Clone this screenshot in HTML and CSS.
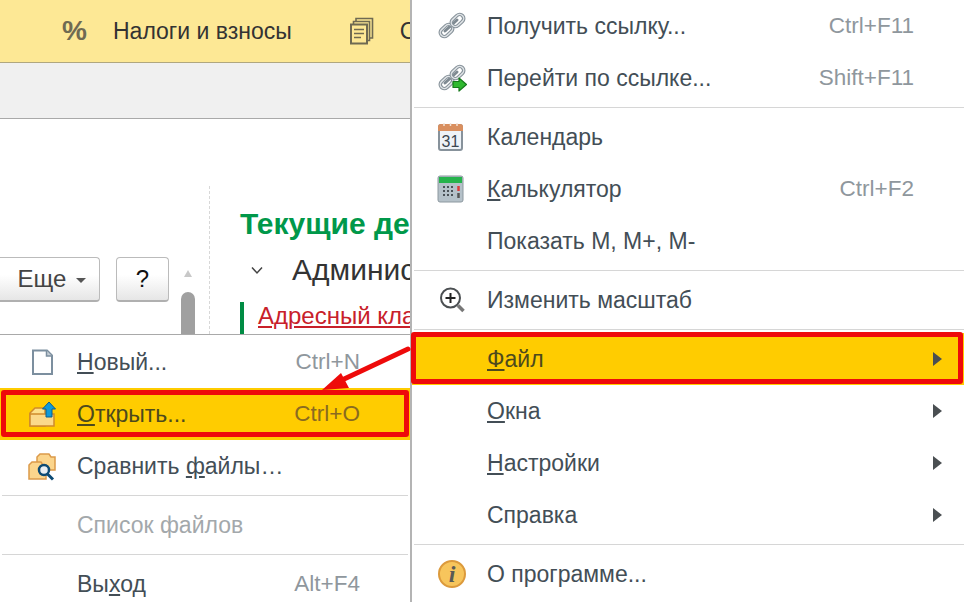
FILE: index.html
```html
<!DOCTYPE html>
<html lang="en">
<head>
    <meta charset="UTF-8">
    <meta name="viewport" content="width=device-width, initial-scale=1.0">
    <title>Меню Файл</title>
    <link rel="stylesheet" href="styles.css">
</head>
<body>
    <div class="page">
        <!-- Left side: application window and the file submenu -->
        <div class="left">
            <div class="toolbar">
                <span class="percent">%</span>
                <span class="tool-label">Налоги и взносы</span>
                <svg class="docs" width="24" height="28" viewBox="0 0 24 28" fill="none" stroke="#6f6a52" stroke-width="1.6">
                    <path d="M6 4.500V1.500H22.500V21H20"/>
                    <path d="M3.500 7V4.500H19.500V23.500H17"/>
                    <rect x="1" y="7.500" width="16" height="19" fill="#fde895" stroke-width="2"/>
                    <path d="M4 12.500H14M4 16.500H14M4 20.500H11"/>
                </svg>
                <span class="tool-label">С</span>
            </div>
            <div class="strip"></div>
            <div class="work">
                <div class="work-left">
                    <div class="buttons">
                        <div class="btn btn-more">Еще<span class="caret"></span></div>
                        <div class="btn btn-help">?</div>
                        <div class="scroll">
                            <span class="scroll-up"></span>
                            <span class="scroll-thumb"></span>
                        </div>
                    </div>
                </div>
                <div class="work-right">
                    <h2 class="tasks-title">Текущие де</h2>
                    <div class="tasks-group">
                        <svg width="14" height="9" viewBox="0 0 14 9" fill="none" stroke="#444" stroke-width="1.5"><path d="M2 1.500L7 7L12 1.500"/></svg>
                        <span>Админис</span>
                    </div>
                    <div class="tasks-item"><a class="tasks-link">Адресный клас</a></div>
                </div>
            </div>
            <div class="menu menu-file">
                <div class="row">
                    <svg class="ico" width="30" height="30" viewBox="0 0 30 30" fill="#fff" stroke="#7c8f9f" stroke-width="2"><path d="M6 3.500H20L25 8.500V27H6Z"/><path d="M19.500 3.500V9H25" stroke-width="1.500" fill="#c5ced6"/></svg>
                    <span class="label"><u>Н</u>овый...</span>
                    <span class="keys">Ctrl+N</span>
                </div>
                <div class="row hot">
                    <svg class="ico" width="30" height="30" viewBox="0 0 30 30"><path d="M3 14L8 9H18V27H3Z" fill="#fde08a" stroke="#d08a2c" stroke-width="1.500"/><path d="M3 15H27V27H3Z" fill="#fbd98a" stroke="#d08a2c" stroke-width="1.500"/><path d="M22 3L28.500 10H25V18H19V10H15.500Z" fill="#0f9ad8" stroke="#0b5f8f"/></svg>
                    <span class="label"><u>О</u>ткрыть...</span>
                    <span class="keys">Ctrl+O</span>
                </div>
                <div class="row">
                    <svg class="ico" width="30" height="30" viewBox="0 0 30 30"><path d="M10 6L13 3H22L24 6H28V19H10Z" fill="#fbd58c" stroke="#dc9a4a" stroke-width="1.500"/><path d="M2 14L5 11H14L16 14H19V28H2Z" fill="#fbd58c" stroke="#dc9a4a" stroke-width="1.500"/><circle cx="17" cy="19" r="5" fill="#e9eef2" stroke="#0c4a74" stroke-width="2.500"/><path d="M20.500 23L26 28.500" stroke="#0c4a74" stroke-width="3"/></svg>
                    <span class="label">Сравнить <u>ф</u>айлы…</span>
                </div>
                <div class="sep"></div>
                <div class="row off">
                    <span class="ico"></span>
                    <span class="label">Список файлов</span>
                </div>
                <div class="sep"></div>
                <div class="row">
                    <span class="ico"></span>
                    <span class="label">Вы<u>х</u>од</span>
                    <span class="keys">Alt+F4</span>
                </div>
            </div>
        </div>

        <!-- Right side: main menu -->
        <div class="menu menu-main">
            <div class="row">
                <svg class="ico" width="30" height="30" viewBox="0 0 30 30" fill="none" stroke-linecap="round"><g id="chain"><path d="M8 20L20 9" stroke="#7f8a92" stroke-width="3"/><rect x="2.500" y="15.500" width="14" height="8" rx="4" transform="rotate(-43 9.500 19.500)" stroke="#88939b" stroke-width="3.600"/><rect x="2.500" y="15.500" width="14" height="8" rx="4" transform="rotate(-43 9.500 19.500)" stroke="#dfe3e6" stroke-width="1.400"/><rect x="13.500" y="5.500" width="14" height="8" rx="4" transform="rotate(-43 20.500 9.500)" stroke="#88939b" stroke-width="3.600"/><rect x="13.500" y="5.500" width="14" height="8" rx="4" transform="rotate(-43 20.500 9.500)" stroke="#dfe3e6" stroke-width="1.400"/></g></svg>
                <span class="label">Получить ссылку...</span>
                <span class="keys">Ctrl+F11</span>
            </div>
            <div class="row">
                <svg class="ico" width="30" height="30" viewBox="0 0 30 30" fill="none" stroke-linecap="round"><use href="#chain"/><path d="M22 15L29.500 21.500L22 28V24.500H16V18.500H22Z" fill="#2fb82f" stroke="#167a1c" stroke-width="1.200" stroke-linejoin="round"/></svg>
                <span class="label">Перейти по ссылке...</span>
                <span class="keys">Shift+F11</span>
            </div>
            <div class="sep"></div>
            <div class="row">
                <svg class="ico" width="30" height="30" viewBox="0 0 30 30"><rect x="2" y="3" width="23" height="25" rx="2" fill="#eef3f8" stroke="#87929b" stroke-width="2"/><path d="M1 5Q1 2 4 2H23Q26 2 26 5V9H1Z" fill="#d98f5f"/><path d="M7 1V4M13.500 1V4M20 1V4" stroke="#f3e3d6" stroke-width="1.500"/><text class="cal-day" x="13.500" y="24.500" text-anchor="middle">31</text></svg>
                <span class="label">Календарь</span>
            </div>
            <div class="row">
                <svg class="ico" width="30" height="30" viewBox="0 0 30 30"><rect x="1" y="2" width="25" height="26" rx="2" fill="#b5c1c9" stroke="#8c989f"/><rect x="2" y="3" width="23" height="6" fill="#26b34c"/><path d="M6 13H18M6 17H18M6 21H18" stroke="#4a5157" stroke-width="2" stroke-dasharray="2 2"/><path d="M21.500 12V17" stroke="#dd3b3b" stroke-width="2.500"/><path d="M21.500 19V24" stroke="#555" stroke-width="2.500"/></svg>
                <span class="label"><u>К</u>алькулятор</span>
                <span class="keys">Ctrl+F2</span>
            </div>
            <div class="row">
                <span class="ico"></span>
                <span class="label">Показать M, M+, M-</span>
            </div>
            <div class="sep"></div>
            <div class="row">
                <svg class="ico" width="30" height="30" viewBox="0 0 30 30" fill="none"><circle cx="13.500" cy="13" r="9.500" fill="#fff" stroke="#4b4f52" stroke-width="2"/><path d="M8.500 13H18.500M13.500 8V18" stroke="#222" stroke-width="2"/><path d="M21 20.500L26.500 26" stroke="#777" stroke-width="3.500"/></svg>
                <span class="label">Изменить масштаб</span>
            </div>
            <div class="sep"></div>
            <div class="row hot hot-main">
                <span class="ico"></span>
                <span class="label"><u>Ф</u>айл</span>
                <span class="sub"></span>
            </div>
            <div class="row">
                <span class="ico"></span>
                <span class="label"><u>О</u>кна</span>
                <span class="sub"></span>
            </div>
            <div class="row">
                <span class="ico"></span>
                <span class="label"><u>Н</u>астройки</span>
                <span class="sub"></span>
            </div>
            <div class="row">
                <span class="ico"></span>
                <span class="label">Справка</span>
                <span class="sub"></span>
            </div>
            <div class="sep"></div>
            <div class="row">
                <svg class="ico" width="30" height="30" viewBox="0 0 30 30"><circle cx="15" cy="15" r="13" fill="#f7c55c" stroke="#dc9a3c" stroke-width="2"/><text class="info-i" x="15" y="23" text-anchor="middle">i</text></svg>
                <span class="label">О программе...</span>
            </div>
        </div>

        <!-- Red callout arrow -->
        <svg class="callout" width="966" height="602" viewBox="0 0 966 602">
            <path d="M408 349L342 380" stroke="#ee0a0a" stroke-width="5" stroke-linecap="round" fill="none"/>
            <path d="M322 390L341 373L349 388Z" fill="#ee0a0a"/>
        </svg>
    </div>
</body>
</html>
```

FILE: styles.css
```css
body {
    margin: 0;
    font-family: "Liberation Sans", Arial, sans-serif;
    background-color: #fff;
    overflow: hidden;
}
.page {
    position: relative;
    display: flex;
    width: 966px;
    height: 602px;
    overflow: hidden;
}
.left {
    width: 410px;
    flex-shrink: 0;
    overflow: hidden;
}

/* Application window */
.toolbar {
    display: flex;
    align-items: center;
    height: 62px;
    padding-left: 62px;
    background-color: #fde895;
    border-bottom: 1px solid #b0a77f;
    white-space: nowrap;
}
.percent {
    flex-shrink: 0;
    width: 51px;
    font-size: 28px;
    font-weight: bold;
    color: #6f6a52;
}
.tool-label {
    flex-shrink: 0;
    font-size: 23px;
    color: #333;
}
.docs {
    flex-shrink: 0;
    margin: 0 26px 0 58px;
}
.strip {
    height: 55px;
    background-color: #f0f0f0;
    border-bottom: 1px solid #a9a9a9;
}
.work {
    display: flex;
    height: 215px;
    overflow: hidden;
}
.work-left {
    flex-shrink: 0;
    width: 209px;
    height: 148px;
    margin-top: 67px;
    border-right: 1px dashed #d8d8d8;
}
.buttons {
    display: flex;
    align-items: flex-start;
    padding-top: 71px;
    margin-left: -10px;
}
.btn {
    display: flex;
    align-items: center;
    justify-content: center;
    box-sizing: border-box;
    height: 45px;
    font-size: 24px;
    color: #444;
    background: linear-gradient(#fff 40%, #e6e6e6);
    border: 1px solid #bbb;
    border-bottom: 2px solid #b0b0b0;
    border-radius: 4px;
}
.btn-more {
    width: 110px;
    padding-left: 14px;
}
.caret {
    margin: 3px 0 0 10px;
    border-top: 5px solid #555;
    border-left: 5px solid transparent;
    border-right: 5px solid transparent;
}
.btn-help {
    width: 53px;
    margin-left: 16px;
    color: #111;
}
.scroll {
    display: flex;
    flex-direction: column;
    align-items: center;
    width: 14px;
    margin-left: 12px;
}
.scroll-up {
    margin-top: 13px;
    border-bottom: 7px solid #c8c8c8;
    border-left: 4px solid transparent;
    border-right: 4px solid transparent;
}
.scroll-thumb {
    width: 14px;
    height: 60px;
    margin-top: 15px;
    background-color: #a0a0a0;
    border-radius: 7px 7px 0 0;
}
.work-right {
    padding: 90px 0 0 30px;
    white-space: nowrap;
}
.tasks-title {
    margin: 0;
    font-size: 30px;
    line-height: 30px;
    color: #00984a;
}
.tasks-group {
    display: flex;
    align-items: center;
    height: 46px;
    margin-top: 8px;
    padding-left: 10px;
    font-size: 30px;
    color: #333;
}
.tasks-group svg {
    margin-right: 28px;
}
.tasks-item {
    height: 40px;
    margin-top: 9px;
    padding-left: 14px;
    border-left: 4px solid #008c44;
    font-size: 24px;
    line-height: 28px;
}
.tasks-link {
    color: #c8202a;
    text-decoration: underline;
}

/* Menus */
.menu {
    background-color: #fff;
    font-size: 23px;
    color: #434e56;
}
.menu-file {
    height: 267px;
    border-top: 1px solid #a9a9a9;
    --pad-left: 27px;
    --pad-right: 50px;
}
.menu-file .row:first-child {
    margin-top: 1px;
}
.menu-main {
    flex: 1;
    border-left: 2px solid #b4b4b4;
    --pad-left: 25px;
    --pad-right: 52px;
}
.row {
    position: relative;
    display: flex;
    align-items: center;
    height: 52px;
    padding: 0 var(--pad-right) 0 var(--pad-left);
    white-space: nowrap;
}
.ico {
    flex-shrink: 0;
    width: 30px;
    margin-right: 20px;
}
.keys {
    margin-left: auto;
    font-size: 22.5px;
    color: #8f979d;
}
.sub {
    margin: 0 -28px 0 auto;
    border-left: 9px solid #4a4f52;
    border-top: 7px solid transparent;
    border-bottom: 7px solid transparent;
}
.off {
    color: #a3a8ab;
}
.sep {
    display: flex;
    align-items: center;
    height: 7px;
}
.sep::before {
    content: "";
    flex: 1;
    height: 1px;
    margin: 0 2px;
    background-color: #d6d6d6;
}
.hot {
    background-color: #ffcc00;
    color: #4d4a1d;
}
.hot .keys {
    color: #8a6a20;
}
.hot::after {
    content: "";
    position: absolute;
    top: 2px;
    left: 1px;
    right: 1px;
    bottom: 3px;
    border: 5px solid #ee0a0a;
    border-radius: 3px;
}
.hot-main {
    margin-right: 2px;
}
.hot-main .sub {
    margin-right: -30px;
}
.hot-main::after {
    top: -1px;
    left: -1px;
    right: 1px;
    bottom: 1px;
}
.cal-day {
    font-family: "Liberation Sans", Arial, sans-serif;
    font-size: 16px;
    fill: #3c4650;
}
.info-i {
    font-family: "Liberation Serif", serif;
    font-size: 24px;
    font-weight: bold;
    font-style: italic;
    fill: #5a5a55;
}
.callout {
    position: absolute;
    top: 0;
    left: 0;
    pointer-events: none;
}
```
